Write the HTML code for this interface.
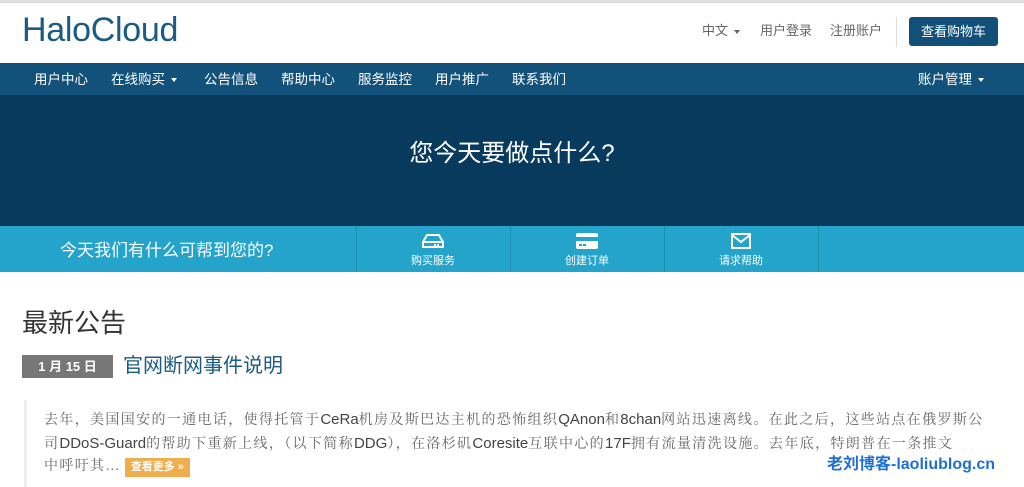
<!DOCTYPE html>
<html><head><meta charset="utf-8"><style>
*{margin:0;padding:0;box-sizing:border-box}
body{width:1024px;height:487px;overflow:hidden;background:#fff;font-family:"Liberation Sans","Noto Sans CJK SC",sans-serif;position:relative}
.a{position:absolute}
.top{top:0;left:0;width:1024px;height:3px;background:#ddd}
.logo{left:22px;top:11px;font-size:34px;color:#1a5b83;letter-spacing:-0.3px}
.tl{top:20px;font-size:13px;color:#666}
.cart{left:909px;top:17px;width:89px;height:29px;background:#12507a;color:#fff;font-size:13px;text-align:center;line-height:29px;border-radius:3px}
.vsep{left:896px;top:17px;width:1px;height:30px;background:#ddd}
.nav{top:63px;left:0;width:1024px;height:32px;background:#12527a}
.nav span{position:absolute;top:5px;color:#fff;font-size:13.5px}
.car{display:inline-block;border-left:3px solid transparent;border-right:3px solid transparent;border-top:4px solid #fff;vertical-align:middle;margin-left:6px}
.hero{top:95px;left:0;width:1024px;height:131px;background:#073a5d}
.hero div{position:absolute;width:100%;top:38px;text-align:center;color:#fff;font-size:24px}
.bar{top:226px;left:0;width:1024px;height:46px;background:#24a4ca}
.bar .q{left:60px;top:10px;color:#fff;font-size:17px}
.d{top:0;width:1px;height:46px;background:#1c8fb3}
.it{top:0;width:154px;height:46px;color:#fff;font-size:11px;text-align:center}
.it svg{position:absolute;top:7px;left:66px}
.it span{position:absolute;top:26px;left:0;width:100%}
h2{position:absolute;left:22px;top:303px;font-size:26px;font-weight:normal;color:#333}
.date{left:22px;top:355px;width:91px;height:23px;background:#777;color:#fff;font-weight:bold;font-size:13px;line-height:23px;text-align:center}
.tt{left:123px;top:349px;font-size:20px;color:#1a5b83}
.bq{left:24px;top:400px;width:3px;height:87px;background:#eee}
.txt{left:44px;top:409px;width:980px;font-family:"Liberation Serif","Noto Serif CJK SC",serif;font-size:14px;line-height:22.5px;color:#666;letter-spacing:1.35px}
.txt b{font-family:"Liberation Sans",sans-serif;font-weight:normal;font-size:15px;color:#444;letter-spacing:0}
.more{display:inline-block;background:#f0ad4e;color:#fff;font-family:"Liberation Sans","Noto Sans CJK SC",sans-serif;font-size:11px;font-weight:bold;padding:1px 6px;line-height:17px;margin-left:4px;letter-spacing:0}
.wm{left:827px;top:450px;color:#1d6fd6;font-size:16px;font-weight:bold;background:#fff}
</style></head><body>
<div class="a top"></div>
<div class="a logo">HaloCloud</div>
<div class="a tl" style="left:702px">中文<span class="car" style="border-top-color:#666"></span></div>
<div class="a tl" style="left:760px">用户登录</div>
<div class="a tl" style="left:830px">注册账户</div>
<div class="a vsep"></div>
<div class="a cart">查看购物车</div>
<div class="a nav">
<span style="left:34px">用户中心</span>
<span style="left:111px">在线购买<i class="car"></i></span>
<span style="left:204px">公告信息</span>
<span style="left:281px">帮助中心</span>
<span style="left:358px">服务监控</span>
<span style="left:435px">用户推广</span>
<span style="left:512px">联系我们</span>
<span style="left:918px">账户管理<i class="car"></i></span>
</div>
<div class="a hero"><div>您今天要做点什么?</div></div>
<div class="a bar">
<div class="a q">今天我们有什么可帮到您的?</div>
<div class="a d" style="left:356px"></div>
<div class="a d" style="left:510px"></div>
<div class="a d" style="left:664px"></div>
<div class="a d" style="left:818px"></div>
<div class="a it" style="left:356px"><svg width="22" height="16" viewBox="0 0 22 16"><path d="M5 2h12l4 7v5H1V9z M1 9h20" fill="none" stroke="#fff" stroke-width="2"/><rect x="15" y="11" width="2" height="2" fill="#fff"/><rect x="12" y="11" width="2" height="2" fill="#fff"/></svg><span>购买服务</span></div>
<div class="a it" style="left:510px"><svg width="22" height="16" viewBox="0 0 22 16"><rect x="0" y="0" width="22" height="16" rx="2" fill="#fff"/><rect x="0" y="4" width="22" height="4" fill="#24a4ca"/><rect x="3" y="11" width="3" height="2" fill="#24a4ca"/><rect x="7" y="11" width="3" height="2" fill="#24a4ca"/></svg><span>创建订单</span></div>
<div class="a it" style="left:664px"><svg width="22" height="16" viewBox="0 0 22 16"><rect x="2" y="1" width="18" height="14" fill="none" stroke="#fff" stroke-width="2"/><path d="M2 2l9 7 9-7" fill="none" stroke="#fff" stroke-width="2"/></svg><span>请求帮助</span></div>
</div>
<h2>最新公告</h2>
<div class="a date">1 月 15 日</div>
<div class="a tt">官网断网事件说明</div>
<div class="a bq"></div>
<div class="a txt">去年，美国国安的一通电话，使得托管于<b>CeRa</b>机房及斯巴达主机的恐怖组织<b>QAnon</b>和<b>8chan</b>网站迅速离线。在此之后，这些站点在俄罗斯公<br>司<b>DDoS-Guard</b>的帮助下重新上线，（以下简称<b>DDG</b>），在洛杉矶<b>Coresite</b>互联中心的<b>17F</b>拥有流量清洗设施。去年底，特朗普在一条推文<br>中呼吁其…<span class="more">查看更多 »</span></div>
<div class="a wm">老刘博客-laoliublog.cn</div>
</body></html>
